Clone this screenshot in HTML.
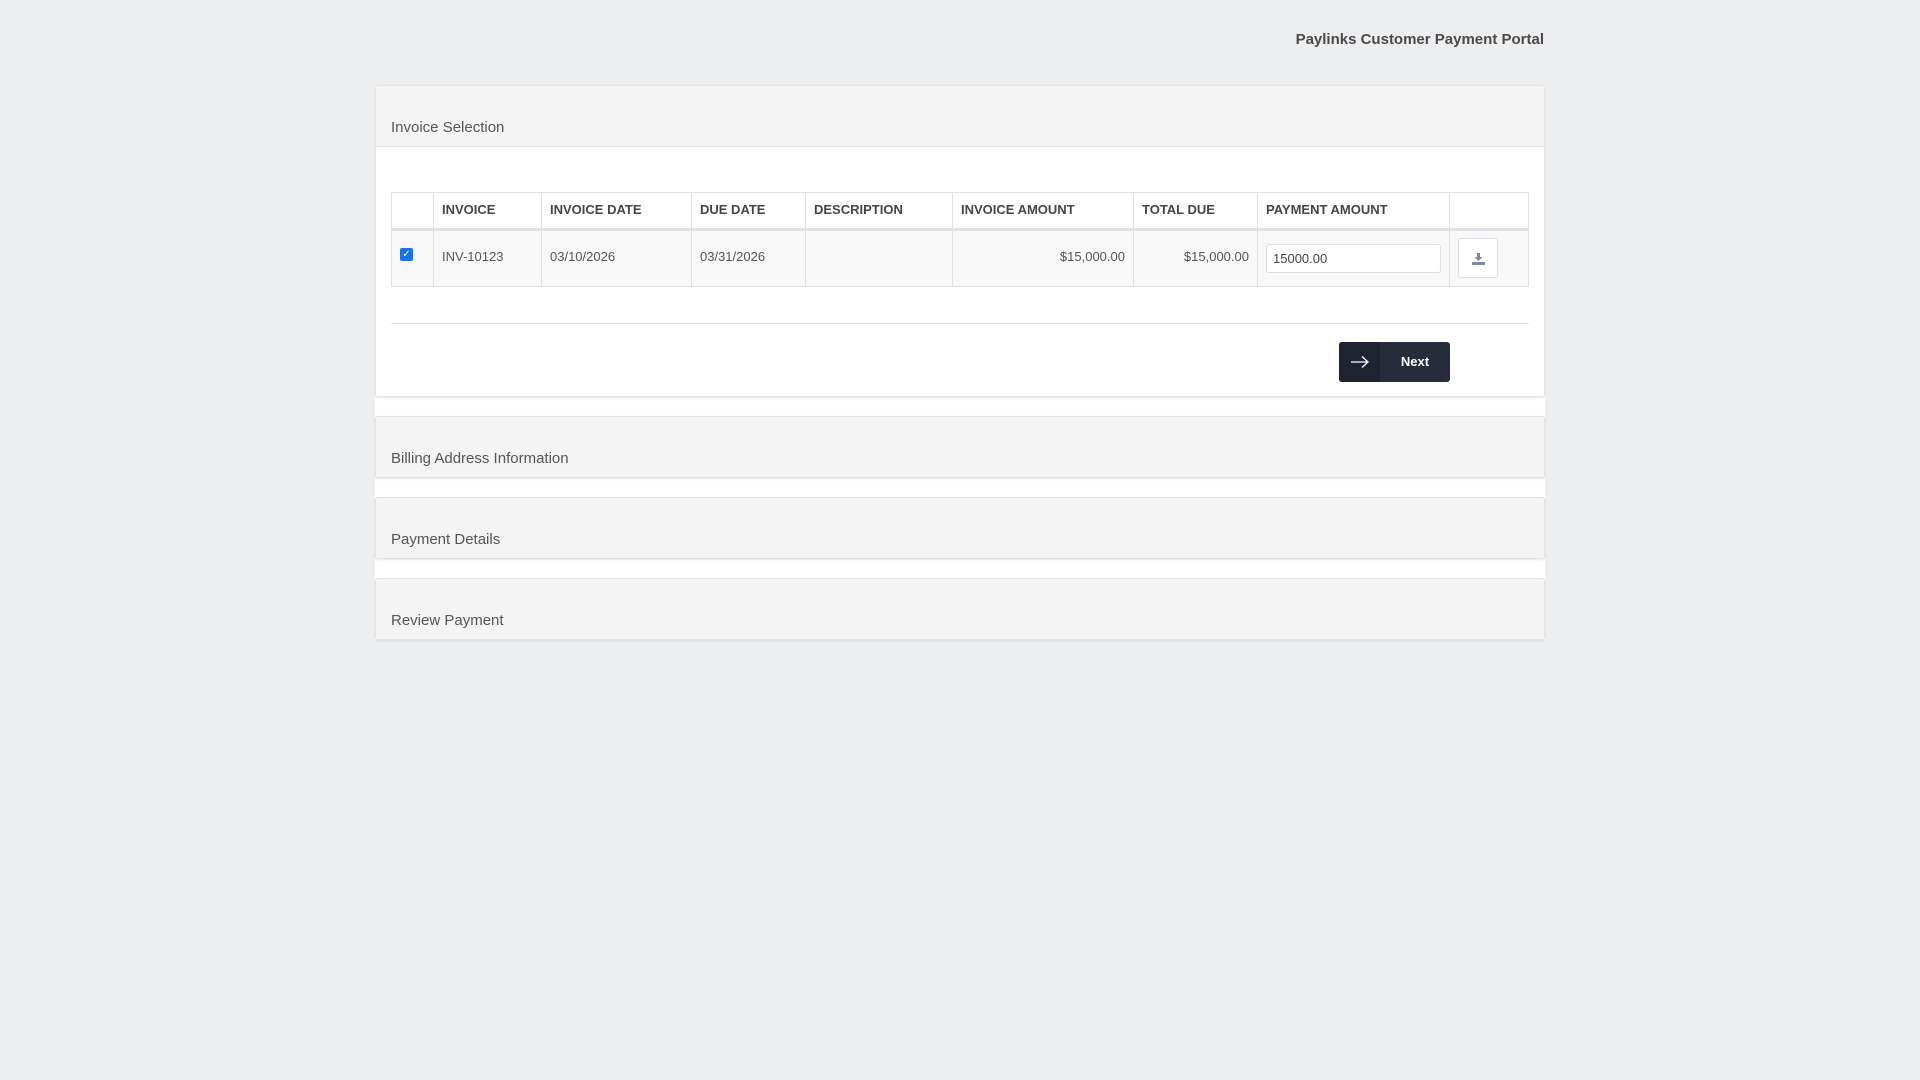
<!DOCTYPE html>
<html><head><style>
*{box-sizing:border-box;margin:0;padding:0}
body{width:1920px;height:1080px;background:#edeef0;font-family:"Liberation Sans",sans-serif;color:#444;position:relative;overflow:hidden}
.abs{position:absolute}
.wrap{left:375px;top:85px;width:1170px;height:555px;background:#fff}
.panel{position:absolute;left:375px;width:1170px;background:#f4f4f4;border:1px solid #e2e3e5;border-radius:3px;box-shadow:0 1px 2px rgba(0,0,0,.1)}
.ptitle{position:absolute;left:15px;font-size:15px;color:#555}
table{position:absolute;left:391px;top:192px;width:1138px;border-collapse:collapse;font-size:13px;table-layout:fixed}
th,td{border:1px solid #dfe1e4;padding:0 8px;text-align:left;white-space:nowrap}
th{height:37px;font-weight:bold;color:#454545;border-bottom:3px solid #dfe1e4;padding-bottom:2px}
td{height:57px;background:#f8f8f8;color:#555;padding-bottom:4px}
</style></head><body>
<div class="abs" style="right:376px;top:31px;font-size:15px;font-weight:bold;color:#4a4a4a">Paylinks Customer Payment Portal</div>
<div class="abs wrap"></div>
<div class="panel" style="top:85px;height:312px;background:#fff">
 <div style="position:absolute;left:0;top:0;right:0;height:61px;background:#f4f4f4;border-bottom:1px solid #e2e3e5"></div>
 <div class="ptitle" style="top:33px">Invoice Selection</div>
</div>
<table>
<colgroup><col style="width:42px"><col style="width:108px"><col style="width:150px"><col style="width:114px"><col style="width:147px"><col style="width:181px"><col style="width:124px"><col style="width:192px"><col></colgroup>
<tr><th></th><th>INVOICE</th><th>INVOICE DATE</th><th>DUE DATE</th><th>DESCRIPTION</th><th>INVOICE AMOUNT</th><th>TOTAL DUE</th><th>PAYMENT AMOUNT</th><th></th></tr>
<tr><td><div style="width:13px;height:13px;background:#1a73e8;border-radius:2px;color:#fff;font-size:10px;line-height:13px;text-align:center;margin-top:-4px">✓</div></td><td>INV-10123</td><td>03/10/2026</td><td>03/31/2026</td><td></td><td style="text-align:right">$15,000.00</td><td style="text-align:right">$15,000.00</td>
<td style="padding-bottom:0"><div style="width:175px;height:29px;border:1px solid #dcdfe3;border-radius:3px;background:#fff;font-size:13px;line-height:27px;padding-left:6px;color:#444">15000.00</div></td>
<td style="padding-bottom:0"><div style="width:40px;height:40px;border:1px solid #dcdfe3;border-radius:3px;background:#fff;position:relative;margin-top:-2px"><svg style="position:absolute;left:13px;top:13px" width="13" height="13" viewBox="0 0 13 13"><path d="M5 1h3v4h2.5L6.5 9 2.5 5H5z" fill="#7a8aa8"/><rect x="0" y="10" width="13" height="3" fill="#7a8aa8"/></svg></div></td></tr>
</table>
<div class="abs" style="left:391px;top:323px;width:1138px;height:1px;background:#e0e2e5"></div>
<div class="abs" style="left:1339px;top:342px;width:111px;height:40px;background:#272c3d;border-radius:3px;overflow:hidden">
 <div style="position:absolute;left:0;top:0;width:41px;height:40px;background:#1f2332"></div>
 <svg style="position:absolute;left:11px;top:13px" width="20" height="14" viewBox="0 0 20 14"><path d="M1 7h17M12 1.5l6 5.5-6 5.5" fill="none" stroke="#fff" stroke-width="1.3"/></svg>
 <div style="position:absolute;left:41px;right:0;top:0;line-height:40px;text-align:center;color:#fff;font-weight:bold;font-size:13px">Next</div>
</div>
<div class="panel" style="top:416px;height:62px"><div class="ptitle" style="top:33px">Billing Address Information</div></div>
<div class="panel" style="top:497px;height:62px"><div class="ptitle" style="top:33px">Payment Details</div></div>
<div class="panel" style="top:578px;height:62px"><div class="ptitle" style="top:33px">Review Payment</div></div>
</body></html>
